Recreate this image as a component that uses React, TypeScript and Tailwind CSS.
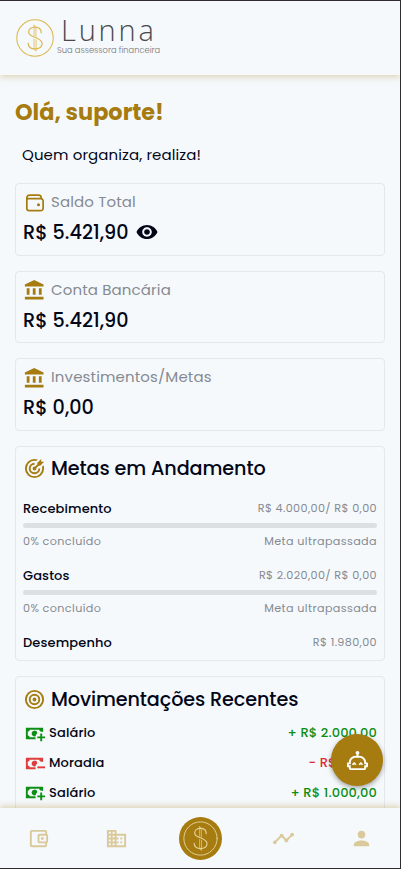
import type { ReactNode } from 'react';
import { IoMdEye } from 'react-icons/io';
import {
  MdAccountBalance,
  MdBusiness,
  MdOutlineAccountBalanceWallet,
  MdPerson,
  MdTimeline,
} from 'react-icons/md';

interface Goal {
  name: string;
  amount: string;
}

interface Movement {
  name: string;
  amount: string;
  type: 'in' | 'out';
}

const goals: Goal[] = [
  { name: 'Recebimento', amount: 'R$ 4.000,00/ R$ 0,00' },
  { name: 'Gastos', amount: 'R$ 2.020,00/ R$ 0,00' },
];

const movements: Movement[] = [
  { name: 'Salário', amount: '+ R$ 2.000,00', type: 'in' },
  { name: 'Moradia', amount: '− R$ 50,00', type: 'out' },
  { name: 'Salário', amount: '+ R$ 1.000,00', type: 'in' },
];

const CASH_PATH =
  'M14.97 11.61C14.85 10.28 13.59 8.97 12 9C10.3 9.03 9 10.3 9 12C9 13.7 10.3 14.94 12 15C12.38 15 12.77 14.92 13.14 14.77C13.41 13.67 13.86 12.63 14.97 11.61M13 16H7C7 14.9 6.1 14 5 14V10C6.1 10 7 9.1 7 8H17C17 9.1 17.9 10 19 10V10.06C19.67 10.06 20.34 10.18 21 10.4V6H3V18H13.32C13.1 17.33 13 16.66 13 16Z';

const CashIcon = ({ type }: { type: Movement['type'] }) => (
  <svg viewBox="0 0 24 24" fill="currentColor" className="size-[23px] shrink-0">
    <path d={CASH_PATH} />
    <path d={type === 'in' ? 'M15 15V17H18V20H20V17H23V15H20V12H18V15Z' : 'M15 15V17H23V15Z'} />
  </svg>
);

const WalletIcon = () => (
  <svg viewBox="0 0 24 24" fill="none" stroke="currentColor" strokeWidth="1.8" strokeLinejoin="round" className="size-[23px] shrink-0">
    <path d="M4 8V6A2.8 2.8 0 0 1 6.8 3.2H16.5A2.5 2.5 0 0 1 19 5.7V7" />
    <path d="M4 8.5A1.8 1.8 0 0 1 5.8 7H18.5A2.5 2.5 0 0 1 21 9.5V17A2.5 2.5 0 0 1 18.5 19.5H6.5A2.5 2.5 0 0 1 4 17Z" />
    <circle cx="16.2" cy="13.3" r="1.6" fill="currentColor" stroke="none" />
  </svg>
);

const GoalIcon = () => (
  <svg viewBox="0 0 24 24" fill="currentColor" className="size-[23px] shrink-0">
    <path d="M12 2A10 10 0 0 0 2 12A10 10 0 0 0 12 22A10 10 0 0 0 22 12C22 10.84 21.79 9.69 21.39 8.61L19.79 10.21C19.93 10.8 20 11.4 20 12A8 8 0 0 1 12 20A8 8 0 0 1 4 12A8 8 0 0 1 12 4C12.6 4 13.2 4.07 13.79 4.21L15.4 2.6C14.31 2.21 13.16 2 12 2M19 2L15 6V7.5L12.45 10.05C12.3 10 12.15 10 12 10A2 2 0 0 0 10 12A2 2 0 0 0 12 14A2 2 0 0 0 14 12C14 11.85 14 11.7 13.95 11.55L16.5 9H18L22 5H19V2M12 6A6 6 0 0 0 6 12A6 6 0 0 0 12 18A6 6 0 0 0 18 12H16A4 4 0 0 1 12 16A4 4 0 0 1 8 12A4 4 0 0 1 12 8V6Z" />
  </svg>
);

const TargetIcon = () => (
  <svg viewBox="0 0 24 24" fill="none" stroke="currentColor" strokeWidth="2" className="size-[23px] shrink-0">
    <circle cx="12" cy="12" r="9" />
    <circle cx="12" cy="12" r="5" />
    <circle cx="12" cy="12" r="2" fill="currentColor" stroke="none" />
  </svg>
);

const RobotIcon = () => (
  <svg viewBox="0 0 24 24" fill="currentColor" className="size-[23px]">
    <path d="M22 14H21C21 10.13 17.87 7 14 7H13V5.73C13.6 5.39 14 4.74 14 4C14 2.9 13.11 2 12 2S10 2.9 10 4C10 4.74 10.4 5.39 11 5.73V7H10C6.13 7 3 10.13 3 14H2C1.45 14 1 14.45 1 15V18C1 18.55 1.45 19 2 19H3V20C3 21.11 3.9 22 5 22H19C20.11 22 21 21.11 21 20V19H22C22.55 19 23 18.55 23 18V15C23 14.45 22.55 14 22 14M21 17H19V20H5V17H3V16H5V14C5 11.24 7.24 9 10 9H14C16.76 9 19 11.24 19 14V16H21V17Z" />
    <path d="M8.5 13.5L10.86 15.86L9.68 17.04L8.5 15.86L7.32 17.04L6.14 15.86ZM15.5 13.5L17.86 15.86L16.68 17.04L15.5 15.86L14.32 17.04L13.14 15.86Z" />
  </svg>
);

/* Coin with the double-stroke dollar sign, used in the logo and the nav */
const Coin = ({ className, ring }: { className: string; ring: number }) => (
  <svg viewBox="0 0 40 40" fill="none" stroke="currentColor" strokeLinecap="round" className={className}>
    <circle cx="20" cy="20" r={ring} strokeWidth="1.1" />
    <path d="M26.5 14.5C26.5 10.5 23.5 8.5 20 8.5C16 8.5 13.3 10.8 13.3 13.9C13.3 20 27.5 18.5 27.5 26C27.5 29.2 24.2 31.5 20.3 31.5C16 31.5 12.8 29.5 12.8 25.5" strokeWidth="1.3" />
    <path d="M19 6.5V17.5M19 6.5L21 8.5V18.3M19 21V32L21.2 33.7V22" strokeWidth="0.8" />
  </svg>
);

const Card = ({ className = '', children }: { className?: string; children: ReactNode }) => (
  <section className={`rounded-[4px] border border-[#e3e8ee] px-[7px] ${className}`}>{children}</section>
);

interface BalanceCardProps {
  icon: ReactNode;
  label: string;
  value: string;
  children?: ReactNode;
}

const BalanceCard = ({ icon, label, value, children }: BalanceCardProps) => (
  <Card className="h-[72.5px] pt-[7px]">
    <div className="flex h-[23px] items-center">
      <span className="flex w-[28px] pt-[1px] text-[#a67c10]">{icon}</span>
      <span className="text-[15px] tracking-[0.14px] text-[#858a92]">{label}</span>
    </div>
    <div className="mt-[3px] flex h-[30px] items-center gap-[7px] text-[19.2px] leading-[28px] font-medium text-[#020617]">
      <span className="pt-[2px]">{value}</span>
      {children}
    </div>
  </Card>
);

export default function App() {
  return (
    <div className="relative flex h-[869px] w-[401px] flex-col overflow-hidden border-y border-r border-[#302c32] bg-[#f5f9fc] font-['Poppins','Inter',sans-serif] text-[#020617]">
      {/* Header */}
      <header className="flex h-[74px] shrink-0 items-center pl-[16px] shadow-[0_2px_6px_rgba(166,124,16,0.3)]">
        <Coin className="size-[38px] text-[#dcb850]" ring={19.2} />
        <div className="ml-[3px] flex flex-col pb-[2px]">
          <span className="ml-[4px] font-['Open_Sans',sans-serif] text-[29px] leading-[24px] font-light tracking-[2.8px] text-[#4a4a4c]">Lunna</span>
          <span className="mt-[2px] text-[8.3px] leading-[12px] font-light whitespace-nowrap text-[#77777a]">Sua assessora financeira</span>
        </div>
      </header>

      <main className="flex min-h-0 flex-1 flex-col px-[15px]">
        <h1 className="mt-[20px] h-[34px] text-[22.4px] leading-[34px] font-bold text-[#a67c10]">Olá, suporte!</h1>
        <p className="mt-[14px] pl-[7px] text-[15px] leading-[24px] tracking-[0.1px]">Quem organiza, realiza!</p>

        <div className="mt-[16px] flex flex-col gap-[15px]">
          <BalanceCard icon={<WalletIcon />} label="Saldo Total" value="R$ 5.421,90">
            <IoMdEye className="size-[24px]" />
          </BalanceCard>
          <BalanceCard icon={<MdAccountBalance className="size-[22.4px]" />} label="Conta Bancária" value="R$ 5.421,90" />
          <BalanceCard icon={<MdAccountBalance className="size-[22.4px]" />} label="Investimentos/Metas" value="R$ 0,00" />

          <Card className="h-[215.5px] shrink-0 pt-[7px]">
            <div className="flex h-[30px] items-center">
              <span className="flex w-[28px] text-[#a67c10]"><GoalIcon /></span>
              <h2 className="text-[19.2px] leading-[28px] font-medium tracking-[-0.1px]">Metas em Andamento</h2>
            </div>
            {goals.map((goal) => (
              <div key={goal.name} className="h-[67px] pt-[15px]">
                <div className="flex h-[20px] items-center justify-between">
                  <span className="text-[13px] font-medium tracking-[0.12px]">{goal.name}</span>
                  <span className="text-[11.2px] tracking-[0.0333em] text-[#858a92]">{goal.amount}</span>
                </div>
                <div className="mt-[4px] h-[5px] rounded-full bg-[#dce0e3]" />
                <div className="mt-[5px] flex h-[18px] items-center justify-between text-[11.2px] tracking-[0.0333em] text-[#858a92]">
                  <span>0% concluído</span>
                  <span>Meta ultrapassada</span>
                </div>
              </div>
            ))}
            <div className="mt-[15px] flex h-[20px] items-center justify-between">
              <span className="text-[13px] font-medium tracking-[0.12px]">Desempenho</span>
              <span className="text-[11.2px] tracking-[0.0333em] text-[#858a92]">R$ 1.980,00</span>
            </div>
          </Card>

          <Card className="h-[200px] shrink-0 pt-[7px]">
            <div className="flex h-[30px] items-center">
              <span className="flex w-[28px] text-[#a67c10]"><TargetIcon /></span>
              <h2 className="pt-[1px] text-[19.2px] leading-[28px] font-medium tracking-[-0.1px]">Movimentações Recentes</h2>
            </div>
            <div className="mt-[4.7px] flex flex-col">
              {movements.map((movement, index) => (
                <div key={index} className="flex h-[29.6px] items-center text-[13px] leading-[20px] font-medium tracking-[0.12px]">
                  <span className={movement.type === 'in' ? 'text-[#0c8f14]' : 'text-[#df3d3d]'}>
                    <CashIcon type={movement.type} />
                  </span>
                  <span className="ml-[3px]">{movement.name}</span>
                  <span className={`ml-auto ${movement.type === 'in' ? 'text-[#0c8f14]' : 'text-[#df2a36]'}`}>
                    {movement.amount}
                  </span>
                </div>
              ))}
            </div>
          </Card>
        </div>
      </main>

      {/* Bottom navigation */}
      <nav className="relative grid h-[60px] shrink-0 grid-cols-[77px_79px_88px_79px_77px] items-center justify-items-center bg-[#f5f9fc] text-[#dac99b] shadow-[0_-2px_6px_rgba(166,124,16,0.3)]">
        <MdOutlineAccountBalanceWallet className="size-[23px]" />
        <MdBusiness className="size-[23px]" />
        <span className="flex size-[43px] items-center justify-center rounded-full bg-[#a67c10] text-[#e3d09a]">
          <Coin className="size-[35px]" ring={19} />
        </span>
        <MdTimeline className="size-[23px]" />
        <MdPerson className="size-[23px]" />
      </nav>

      {/* Assistant button */}
      <button className="absolute right-[17px] bottom-[82px] flex size-[52px] items-center justify-center rounded-full bg-[#a67c10] text-white shadow-[0_2px_5px_rgba(0,0,0,0.35)]">
        <RobotIcon />
      </button>
    </div>
  );
}
